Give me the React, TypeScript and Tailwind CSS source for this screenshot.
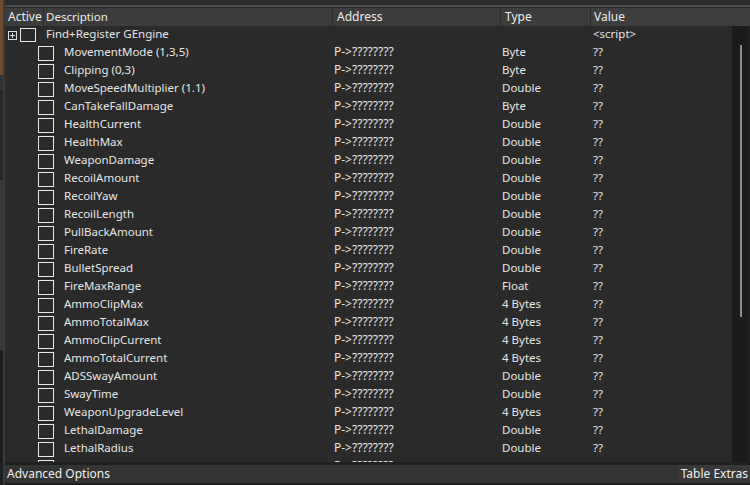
import React from "react";

type Row = { d: string; a: string; t: string; v: string; top?: boolean };

const names: [string, string][] = [
  ["MovementMode (1,3,5)", "Byte"],
  ["Clipping (0,3)", "Byte"],
  ["MoveSpeedMultiplier (1.1)", "Double"],
  ["CanTakeFallDamage", "Byte"],
  ["HealthCurrent", "Double"],
  ["HealthMax", "Double"],
  ["WeaponDamage", "Double"],
  ["RecoilAmount", "Double"],
  ["RecoilYaw", "Double"],
  ["RecoilLength", "Double"],
  ["PullBackAmount", "Double"],
  ["FireRate", "Double"],
  ["BulletSpread", "Double"],
  ["FireMaxRange", "Float"],
  ["AmmoClipMax", "4 Bytes"],
  ["AmmoTotalMax", "4 Bytes"],
  ["AmmoClipCurrent", "4 Bytes"],
  ["AmmoTotalCurrent", "4 Bytes"],
  ["ADSSwayAmount", "Double"],
  ["SwayTime", "Double"],
  ["WeaponUpgradeLevel", "4 Bytes"],
  ["LethalDamage", "Double"],
  ["LethalRadius", "Double"],
  ["LethalMaxAmmo", "4 Bytes"],
];

const rows: Row[] = [
  { d: "Find+Register GEngine", a: "", t: "", v: "<script>", top: true },
  ...names.map(([d, t]) => ({ d, a: "P->????????", t, v: "??" })),
];

const font = { fontFamily: '"Noto Sans", "Open Sans", sans-serif' };

export default function App() {
  return (
    <div
      className="w-[750px] h-[485px] flex bg-[#2a2a2a] text-[#e6e6e6] text-[11.5px] overflow-hidden"
      style={font}
    >
      {/* left edge strip (background window) */}
      <div className="w-[3px] flex flex-col shrink-0">
        <div className="h-[75px] bg-[#6e4b31]" />
        <div className="h-[15px] bg-[#2f3338]" />
        <div className="h-[90px] bg-[#23262a]" />
        <div className="h-[170px] bg-[#34373b]" />
        <div className="h-[10px] bg-[#1a1c1e]" />
        <div className="flex-1 bg-[#1c1e20]" />
      </div>
      <div className="w-[2px] bg-[#3a3a3a] shrink-0" />
      <div className="flex-1 flex flex-col min-w-0">
        {/* top splitter */}
        <div className="h-[8px] shrink-0 flex flex-col bg-[#2b2b2b]">
          <div className="h-[5px]" />
          <div className="h-[2px] bg-[#4e4e4e]" />
          <div className="h-[1px]" />
        </div>
        {/* header */}
        <div className="h-[18px] shrink-0 flex bg-[#3c3c3c] leading-[18px] text-[#ececec] text-[12px]">
          <div className="w-[39px] pl-[3px] border-r border-[#2c2c2c]">Active</div>
          <div className="w-[289px] pl-[2px] border-r border-[#2c2c2c] text-[11.5px]">Description</div>
          <div className="w-[168px] pl-[4px] border-r border-[#2c2c2c]">Address</div>
          <div className="w-[90px] pl-[4px] border-r border-[#2c2c2c]">Type</div>
          <div className="flex-1 pl-[3px] bg-[#3e3e3e]">Value</div>
        </div>
        {/* body */}
        <div className="flex-1 flex min-h-0 bg-[#2a2a2a]">
          <div className="flex-1 overflow-hidden">
            {rows.map((r, i) => (
              <div key={i} className="h-[18px] flex items-center leading-[18px]">
                <div className="w-[328px] flex items-center shrink-0">
                  {r.top ? (
                    <>
                      <div className="ml-[3px] w-[9px] h-[9px] border border-[#dcdcdc] relative">
                        <div className="absolute left-[1px] top-[3px] w-[5px] h-[1px] bg-[#dcdcdc]" />
                        <div className="absolute left-[3px] top-[1px] w-[1px] h-[5px] bg-[#dcdcdc]" />
                      </div>
                      <div className="ml-[3px] w-[16px] h-[14px] border-[1.5px] border-[#e8e8e8]" />
                      <span className="ml-[10px] -mt-[2px]">{r.d}</span>
                    </>
                  ) : (
                    <>
                      <div className="ml-[33px] w-[16px] h-[15px] border-[1.5px] border-[#e8e8e8]" />
                      <span className="ml-[10px] -mt-[2px] whitespace-nowrap">{r.d}</span>
                    </>
                  )}
                </div>
                <div className="w-[168px] shrink-0 pl-[1px] -mt-[2px] whitespace-nowrap text-[12px]">{r.a}</div>
                <div className="w-[91px] shrink-0 pl-[1px] -mt-[2px] whitespace-nowrap">{r.t}</div>
                <div className="flex-1 pl-[1px] -mt-[2px] whitespace-nowrap">{r.v}</div>
              </div>
            ))}
          </div>
          {/* scrollbar */}
          <div className="w-[17px] shrink-0 bg-[#1b1b1b] flex justify-center">
            <div className="mt-[19px] w-[2px] h-[272px] bg-[#8c8c8c]" />
          </div>
          <div className="w-[1px] bg-[#242424]" />
        </div>
        {/* bottom bar */}
        <div className="h-[23px] shrink-0 flex flex-col">
          <div className="h-[3px] bg-[#202020]" />
          <div className="flex-1 flex bg-[#333333] items-center">
            <span className="pl-[2px] text-[#f0f0f0] text-[12px]">Advanced Options</span>
            <div className="flex-1" />
            <span className="h-full flex items-center pr-[2px] pl-[2px] bg-[#383838] text-[#f0f0f0] text-[12px]">Table Extras</span>
          </div>
          <div className="h-[2px] bg-[#1e1e1e]" />
        </div>
      </div>
    </div>
  );
}
